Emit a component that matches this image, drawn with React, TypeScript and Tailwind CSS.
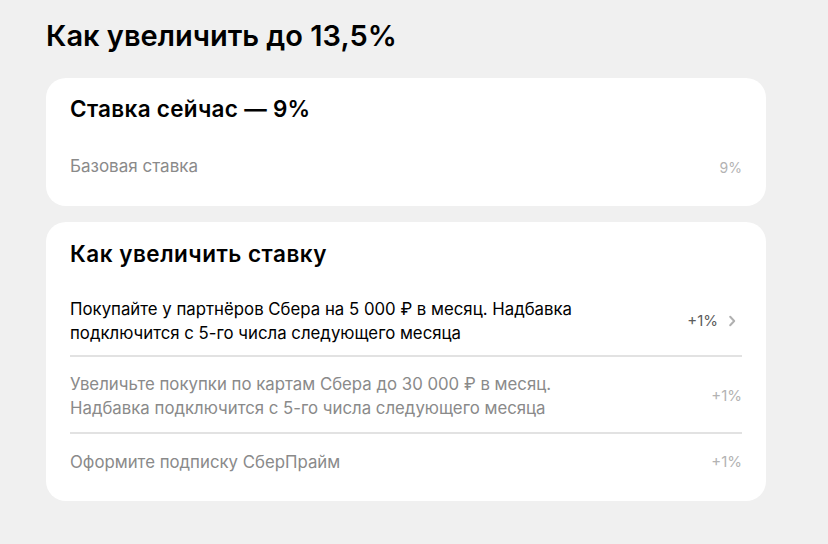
import React from 'react';

type Row = {
    id: string;
    text: string[];
    bonus: string;
    active: boolean;
};

const rows: Row[] = [
    {
        id: 'partners',
        text: ['Покупайте у партнёров Сбера на 5 000 ₽ в месяц. Надбавка', 'подключится с 5-го числа следующего месяца'],
        bonus: '+1%',
        active: true,
    },
    {
        id: 'cards',
        text: ['Увеличьте покупки по картам Сбера до 30 000 ₽ в месяц.', 'Надбавка подключится с 5-го числа следующего месяца'],
        bonus: '+1%',
        active: false,
    },
    {
        id: 'prime',
        text: ['Оформите подписку СберПрайм'],
        bonus: '+1%',
        active: false,
    },
];

const ChevronRight: React.FC = () => (
    <span className="w-[20px] h-[20px] ml-[4px] flex items-center justify-center">
        <svg width="8" height="12" viewBox="0 0 8 12" fill="none">
            <path d="M2.2 1.8l4 4.2-4 4.2" stroke="#b0b0b0" strokeWidth="2" strokeLinecap="round" strokeLinejoin="round" />
        </svg>
    </span>
);

const App: React.FC = () => {
    return (
        <div className="min-h-[544px] bg-[#f0f0f0] px-[46px] pt-[18px] font-['Inter','Noto_Sans',sans-serif] text-[#1a1a1a]">
            <h1 className="text-[29px] leading-[36px] font-semibold mb-[24px] text-black">Как увеличить до 13,5%</h1>

            <div className="w-[720px] bg-white rounded-[20px] px-[24px] pt-[17px] pb-[27px]">
                <h2 className="text-[22.5px] leading-[28px] font-semibold tracking-[0.3px] text-black">Ставка сейчас — 9%</h2>
                <div className="flex items-center justify-between mt-[32px] h-[24px]">
                    <span className="text-[17px] text-[#8a8a8a]">Базовая ставка</span>
                    <span className="text-[14px] text-[#b3b3b3]">9%</span>
                </div>
            </div>

            <div className="w-[720px] bg-white rounded-[20px] px-[24px] pt-[18px] pb-[15px] mt-[16px]">
                <h2 className="text-[22.5px] leading-[28px] font-semibold tracking-[0.5px] text-black mb-[14px]">Как увеличить ставку</h2>
                {rows.map((row, i) => (
                    <div
                        key={row.id}
                        className={`flex items-center justify-between ${i === 0 ? 'pt-[15px] pb-[10px]' : i === 1 ? 'pt-[15px] pb-[12px]' : 'pt-[16px] pb-[12px]'} ${i < rows.length - 1 ? 'border-b-2 border-[#e2e2e2]' : ''}`}
                    >
                        <div className={`text-[16.8px] leading-[24px] ${row.active ? 'text-black' : 'text-[#8a8a8a]'}`}>
                            {row.text.map((line) => (
                                <div key={line}>{line}</div>
                            ))}
                        </div>
                        <div className="flex items-center">
                            <span className={`text-[15px] ${row.active ? 'text-[#5c5c5c]' : 'text-[#b3b3b3]'}`}>{row.bonus}</span>
                            {row.active && <ChevronRight />}
                        </div>
                    </div>
                ))}
            </div>
        </div>
    );
};

export default App;
